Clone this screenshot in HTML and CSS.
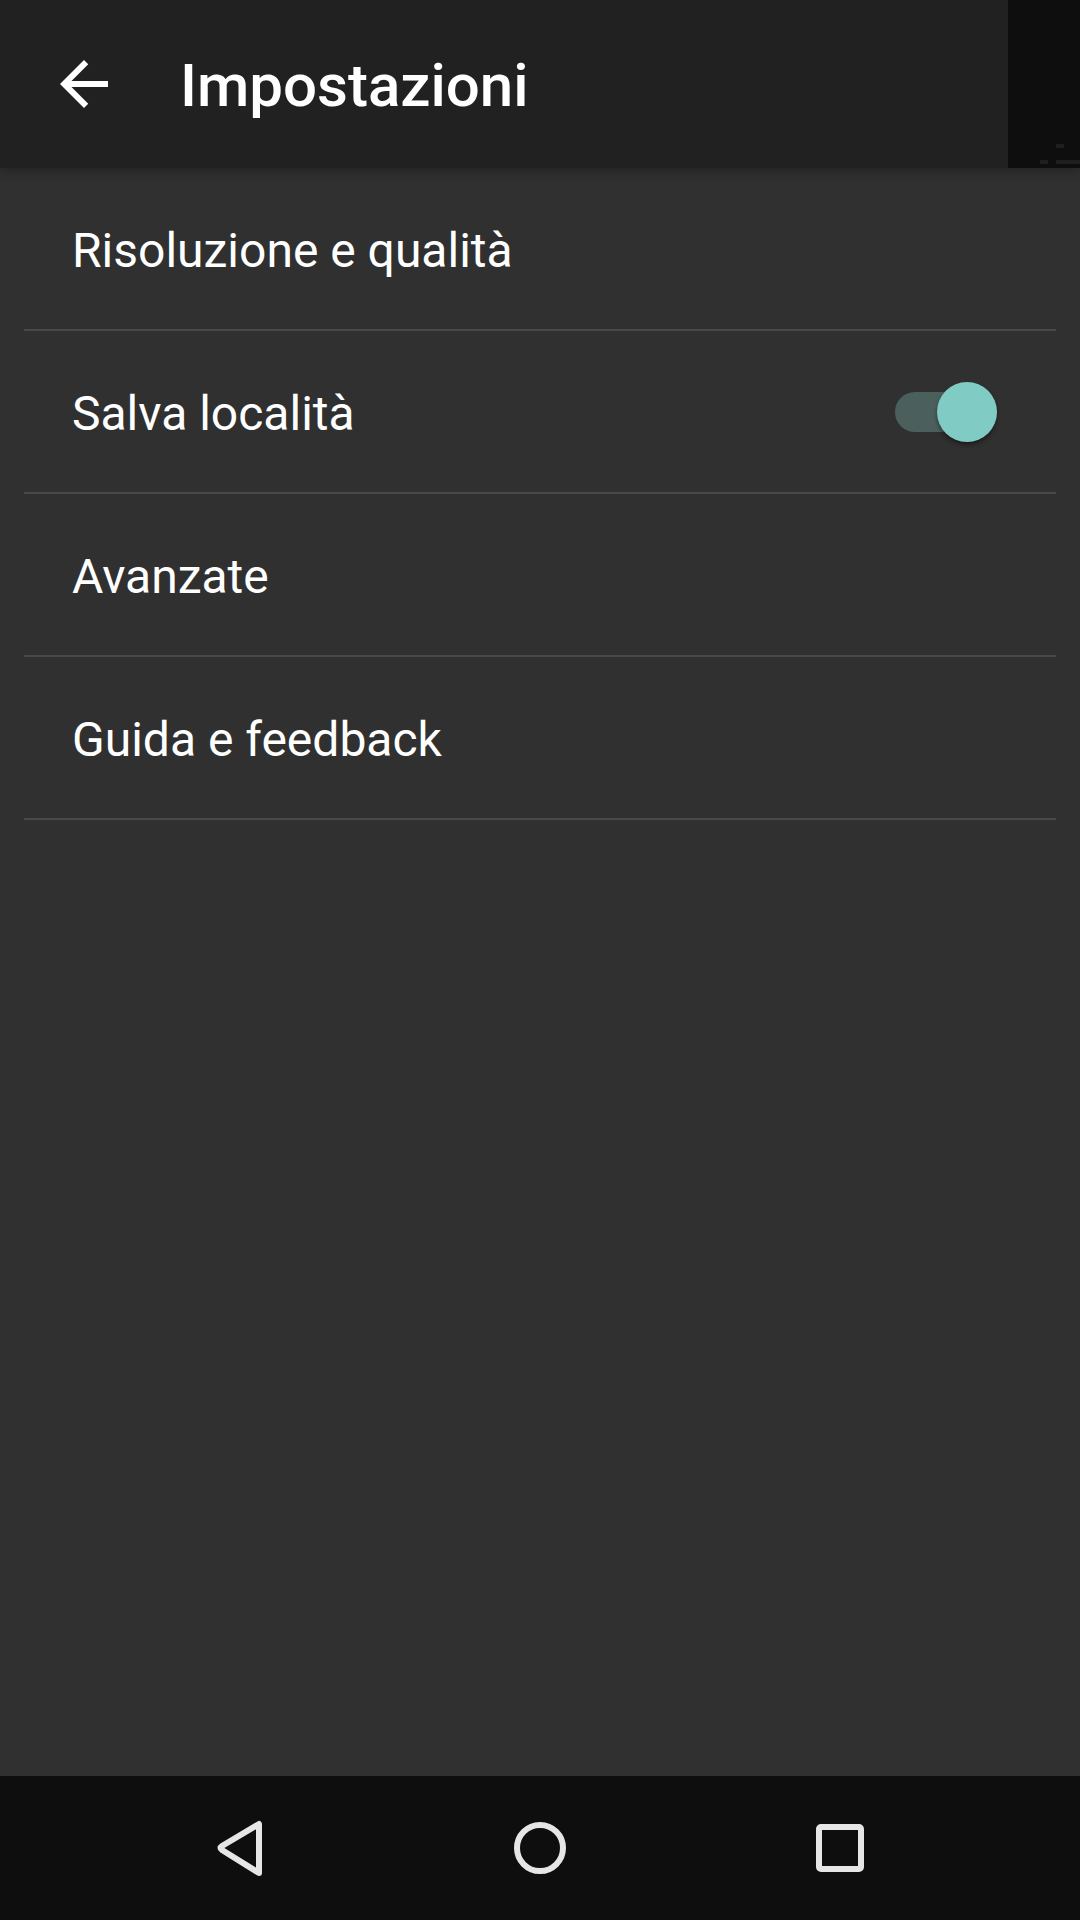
FILE: index.html
```html
<!DOCTYPE html>
<html lang="it">
<head>
    <meta charset="UTF-8">
    <meta name="viewport" content="width=device-width, initial-scale=1.0">
    <title>Impostazioni</title>
    <link rel="stylesheet" href="styles.css">
</head>
<body>
    <div class="screen">
        <header class="toolbar">
            <button class="back" aria-label="Indietro">
                <svg width="72" height="72" viewBox="0 0 24 24">
                    <path d="M20 11H7.83l5.59-5.59L12 4l-8 8 8 8 1.41-1.41L7.83 13H20v-2z" fill="#fff"/>
                </svg>
            </button>
            <h1 class="title">Impostazioni</h1>
            <div class="corner"><span class="dot1"></span><span class="dot2"></span><span class="dot3"></span></div>
        </header>

        <ul class="prefs">
            <li class="pref">Risoluzione e qualità</li>
            <li class="pref">
                <span>Salva località</span>
                <span class="switch on"><span class="track"></span><span class="thumb"></span></span>
            </li>
            <li class="pref">Avanzate</li>
            <li class="pref">Guida e feedback</li>
        </ul>

        <nav class="navbar">
            <svg width="72" height="72" viewBox="0 0 72 72">
                <path d="M55 12 L55 61 L18 38 Q15 36 18 34 Z" fill="none" stroke="#e6e6e6" stroke-width="6" stroke-linejoin="round"/>
            </svg>
            <svg width="72" height="72" viewBox="0 0 72 72">
                <circle cx="36" cy="36" r="23" fill="none" stroke="#e6e6e6" stroke-width="6"/>
            </svg>
            <svg width="72" height="72" viewBox="0 0 72 72">
                <rect x="15" y="15" width="42" height="42" rx="2" fill="none" stroke="#e6e6e6" stroke-width="6"/>
            </svg>
        </nav>
    </div>
</body>
</html>
```

FILE: styles.css
```css
html, body {
    margin: 0;
    padding: 0;
}
body {
    font-family: Roboto, 'Noto Sans', sans-serif;
    background-color: #303030;
    color: #fff;
}
.screen {
    width: 1080px;
    height: 1920px;
    display: flex;
    flex-direction: column;
    overflow: hidden;
}
.toolbar {
    height: 168px;
    flex: none;
    display: flex;
    align-items: center;
    background-color: #212121;
    box-shadow: 0 4px 10px rgba(0, 0, 0, 0.25);
    position: relative;
    z-index: 1;
}
.back {
    width: 72px;
    height: 72px;
    margin-left: 48px;
    padding: 0;
    border: none;
    background: transparent;
    display: flex;
}
.title {
    flex: 1;
    margin: 2px 0 0 60px;
    font-size: 60px;
    font-weight: 500;
    letter-spacing: 0;
}
.corner {
    width: 72px;
    align-self: stretch;
    background-color: #0e0e0e;
    position: relative;
}
.corner span {
    position: absolute;
    background-color: #1f1f1f;
    height: 4px;
}
.dot1 { left: 48px; top: 144px; width: 8px; }
.dot2 { left: 32px; top: 160px; width: 8px; }
.dot3 { left: 48px; top: 160px; width: 24px; }
.prefs {
    list-style: none;
    margin: 0 24px;
    padding: 0;
    flex: 1;
}
.pref {
    box-sizing: border-box;
    height: 163px;
    border-bottom: 2px solid #494949;
    display: flex;
    align-items: center;
    justify-content: space-between;
    padding: 3px 48px 0;
    font-size: 48px;
}
.switch {
    width: 102px;
    height: 60px;
    position: relative;
    margin: -3px 11px 0 0;
}
.track {
    position: absolute;
    left: 0;
    right: 0;
    top: 10px;
    height: 40px;
    border-radius: 20px;
    background-color: #4b5f5c;
}
.thumb {
    position: absolute;
    right: 0;
    top: 0;
    width: 60px;
    height: 60px;
    border-radius: 50%;
    background-color: #80cbc4;
    box-shadow: 0 3px 4px rgba(0, 0, 0, 0.4);
}
.navbar {
    height: 144px;
    flex: none;
    background-color: #0e0e0e;
    display: flex;
    align-items: center;
    justify-content: center;
    gap: 228px;
}
```
